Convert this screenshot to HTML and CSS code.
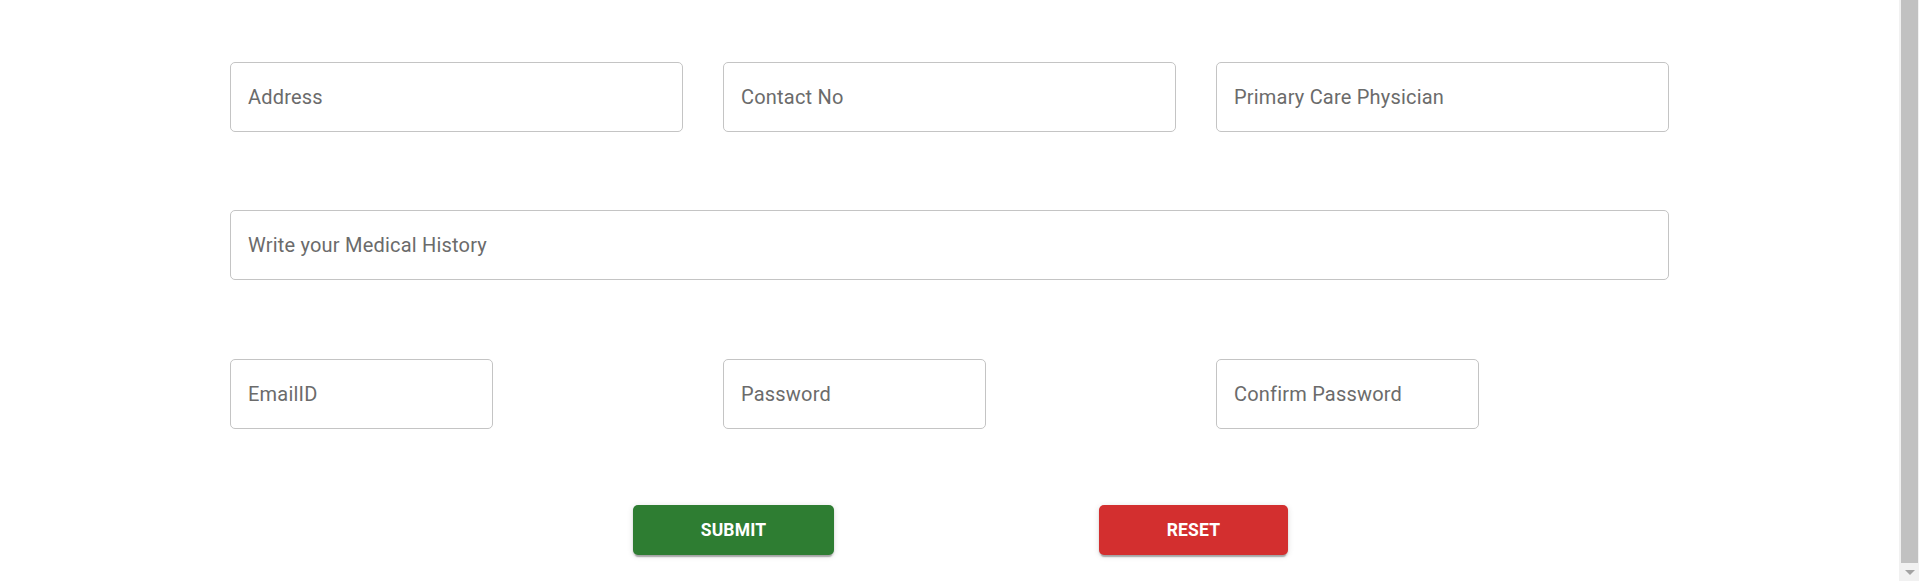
FILE: index.html
```html
<!DOCTYPE html>
<html lang="en">
<head>
<meta charset="utf-8">
<title>Patient Registration</title>
<link rel="stylesheet" href="styles.css">
</head>
<body>
<div class="page">
  <main class="main">
    <form class="form">
      <div class="row row-three">
        <div class="field"><span class="placeholder">Address</span></div>
        <div class="field"><span class="placeholder">Contact No</span></div>
        <div class="field"><span class="placeholder">Primary Care Physician</span></div>
      </div>
      <div class="row row-full">
        <div class="field"><span class="placeholder">Write your Medical History</span></div>
      </div>
      <div class="row row-three row-last">
        <div class="field field-small"><span class="placeholder">EmailID</span></div>
        <div class="field field-small"><span class="placeholder">Password</span></div>
        <div class="field field-small"><span class="placeholder">Confirm Password</span></div>
      </div>
      <div class="actions">
        <button type="button" class="btn btn-submit">SUBMIT</button>
        <button type="button" class="btn btn-reset">RESET</button>
      </div>
    </form>
  </main>
  <div class="scrollbar">
    <div class="thumb"></div>
    <div class="arrow"></div>
  </div>
</div>
</body>
</html>
```

FILE: styles.css
```css
html, body {
  margin: 0;
  padding: 0;
  height: 100%;
  overflow: hidden;
  background: #ffffff;
  font-family: Roboto, "Liberation Sans", Arial, sans-serif;
}

.page {
  display: flex;
  height: 581px;
}

.main {
  flex: 1;
  display: flex;
  justify-content: center;
}

.form {
  width: 1439px;
  padding-top: 62px;
  display: flex;
  flex-direction: column;
  gap: 78px;
}

.row-three {
  display: grid;
  grid-template-columns: 453px 453px 453px;
  column-gap: 40px;
}

.row-last {
  margin-top: 1px;
}

.field {
  height: 70px;
  box-sizing: border-box;
  border: 1px solid #c4c4c4;
  border-radius: 5px;
  padding: 0 17px;
  display: flex;
  align-items: center;
}

.field-small {
  width: 263px;
}

.placeholder {
  font-size: 20px;
  color: #6b6b6b;
  letter-spacing: 0.01em;
}

.actions {
  display: flex;
  gap: 265px;
  padding-left: 403px;
  margin-top: -2px;
}

.btn {
  height: 50px;
  border: none;
  border-radius: 5px;
  color: #ffffff;
  font-family: Roboto, "Liberation Sans", Arial, sans-serif;
  font-size: 17.5px;
  font-weight: 700;
  letter-spacing: 0.01em;
  box-shadow: 0 4px 1px -2px rgba(0,0,0,0.2), 0 2px 2px 0 rgba(0,0,0,0.14), 0 1px 6px 0 rgba(0,0,0,0.12);
}

.btn-submit {
  width: 201px;
  background: #2e7d32;
}

.btn-reset {
  width: 189px;
  background: #d32f2f;
}

.scrollbar {
  width: 20px;
  background: #f1f1f1;
  display: flex;
  flex-direction: column;
  padding: 0 1px 0 2px;
  box-sizing: border-box;
}

.thumb {
  height: 563px;
  background: #c1c1c1;
}

.arrow {
  align-self: center;
  margin-top: 7px;
  width: 0;
  height: 0;
  border-left: 5px solid transparent;
  border-right: 5px solid transparent;
  border-top: 5px solid #a3a3a3;
}
```
